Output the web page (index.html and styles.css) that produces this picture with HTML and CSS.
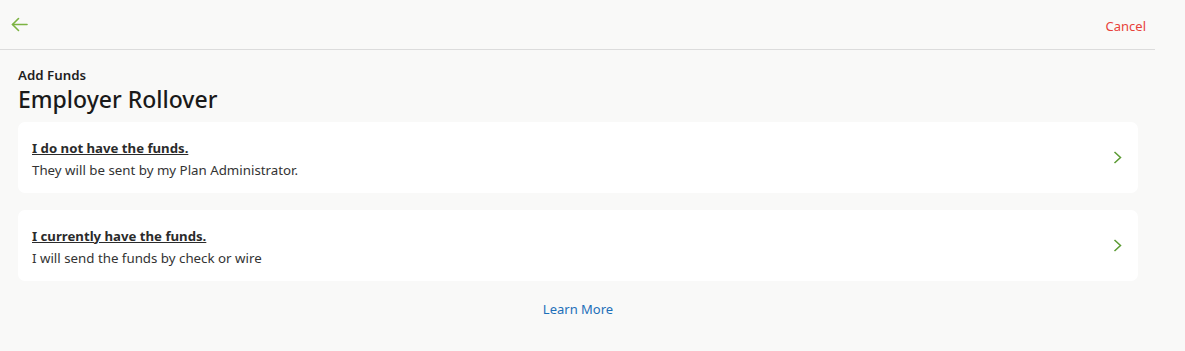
FILE: index.html
```html
<!DOCTYPE html>
<html lang="en">
<head>
  <meta charset="UTF-8">
  <meta name="viewport" content="width=device-width, initial-scale=1.0">
  <title>Employer Rollover</title>
  <link rel="stylesheet" href="styles.css">
</head>
<body>

  <div class="page">
    <header class="topbar">
      <a class="back" href="#" aria-label="Back">
        <svg width="17" height="15" viewBox="0 0 17 15" fill="none" stroke="#7cb342" stroke-width="1.6" stroke-linecap="round" stroke-linejoin="round">
          <path d="M16 7.5H1.5"/>
          <path d="M7.5 1.5L1.5 7.5L7.5 13.5"/>
        </svg>
      </a>
      <a class="cancel" href="#">Cancel</a>
    </header>

    <section class="content">
      <p class="eyebrow">Add Funds</p>
      <h1>Employer Rollover</h1>

      <a class="option" href="#">
        <div class="option-text">
          <span class="option-title">I do not have the funds.</span>
          <span class="option-sub">They will be sent by my Plan Administrator.</span>
        </div>
        <svg class="chevron" width="9" height="13" viewBox="0 0 9 13" fill="none" stroke="#5a9a32" stroke-width="1.5">
          <path d="M1.5 1L7.5 6.5L1.5 12"/>
        </svg>
      </a>

      <a class="option" href="#">
        <div class="option-text">
          <span class="option-title">I currently have the funds.</span>
          <span class="option-sub">I will send the funds by check or wire</span>
        </div>
        <svg class="chevron" width="9" height="13" viewBox="0 0 9 13" fill="none" stroke="#5a9a32" stroke-width="1.5">
          <path d="M1.5 1L7.5 6.5L1.5 12"/>
        </svg>
      </a>

      <div class="more">
        <a href="#">Learn More</a>
      </div>
    </section>
  </div>

</body>
</html>
```

FILE: styles.css
```css
/* Page basics */
body {
  margin: 0;
  background-color: #f9f9f8;
  font-family: "Noto Sans", "Open Sans", sans-serif;
  color: #222;
}
a {
  text-decoration: none;
}

.page {
  width: 1155px;
}

/* Top bar with back arrow and cancel */
.topbar {
  height: 49px;
  border-bottom: 1px solid #dcdcdc;
  display: flex;
  align-items: center;
  justify-content: space-between;
  padding: 0 9px 0 11px;
}
.back {
  display: flex;
}
.cancel {
  color: #e8423a;
  font-size: 13px;
  margin-top: 3px;
}

/* Main content */
.content {
  padding: 17px 17px 0 18px;
}
.eyebrow {
  margin: 0;
  font-size: 13.3px;
  font-weight: 600;
  line-height: 16px;
  color: #1f1f1f;
}
h1 {
  margin: 0 0 7px;
  font-size: 23px;
  font-weight: 500;
  line-height: 32px;
  color: #1a1a1a;
}

.option {
  display: flex;
  align-items: center;
  justify-content: space-between;
  background: #fff;
  border-radius: 7px;
  height: 71px;
  padding: 0 16px 0 14px;
  margin-bottom: 17px;
  box-sizing: border-box;
  color: #333;
}
.option-text {
  display: flex;
  flex-direction: column;
  gap: 5px;
  padding-top: 3px;
}
.option-title {
  font-size: 13.2px;
  font-weight: 700;
  text-decoration: underline;
  line-height: 17px;
  color: #2b2b2b;
}
.option-sub {
  font-size: 13.3px;
  line-height: 17px;
  color: #333;
}

.more {
  text-align: center;
  margin-top: -1px;
}
.more a {
  color: #1d6fb8;
  font-size: 13px;
}
```
